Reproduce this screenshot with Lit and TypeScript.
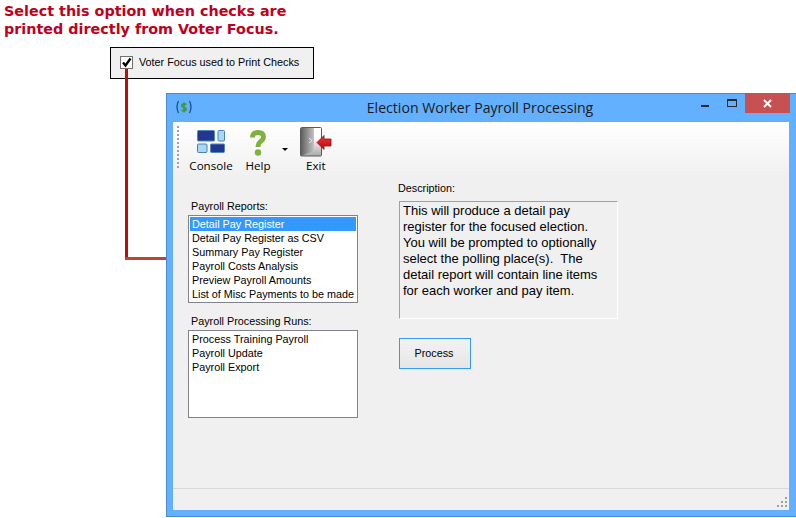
import { LitElement, html, css } from "lit";
import { customElement } from "lit/decorators.js";

const reports = ["Detail Pay Register","Detail Pay Register as CSV","Summary Pay Register","Payroll Costs Analysis","Preview Payroll Amounts","List of Misc Payments to be made"];
const runs = ["Process Training Payroll","Payroll Update","Payroll Export"];
const desc = ["This will produce a detail pay","register for the focused election.","You will be prompted to optionally","select the polling place(s).\u00a0 The","detail report will contain line items","for each worker and pay item."];

@customElement("app-root")
export class AppRoot extends LitElement {
  static styles = css`
    :host { display: block; position: relative; width: 796px; height: 518px; overflow: hidden; background: #fff; font-family: "Liberation Sans", Arial, sans-serif; font-size: 10.8px; color: #000; }
    .note { font: bold 14.35px/18px "DejaVu Sans", Verdana, sans-serif; color: #c00020; padding: 2px 0 0 4px; height: 47px; box-sizing: border-box; white-space: nowrap; }
    .callout { margin-left: 110px; width: 204px; height: 32px; box-sizing: border-box; border: 1px solid #000; background: #f0f0f0; display: flex; align-items: center; padding: 0 0 2px 9px; gap: 6px; }
    .check { width: 13px; height: 13px; box-sizing: border-box; border: 1px solid #707070; background: #fff; display: block; }
    .vline { position: absolute; left: 125px; top: 69px; width: 3px; height: 190px; background: #b80f0a; }
    .hline { position: absolute; left: 125px; top: 257px; width: 41px; height: 3px; background: #c0442c; }
    .window { position: absolute; left: 166px; top: 93px; width: 630px; height: 424px; box-sizing: border-box; background: #62b0ff; border: 1px solid #4a8ccc; border-right: 0; display: flex; flex-direction: column; padding: 0 7px 6px 6px; }
    .titlebar { height: 28px; flex: none; position: relative; display: flex; align-items: center; justify-content: center; }
    .title { font: 14.1px "Open Sans", sans-serif; color: #1a1a1a; position: relative; top: -1px; left: -1px; }
    .appicon { position: absolute; left: 2px; top: 6px; }
    .ctl { position: absolute; left: 528px; top: 5px; }
    .close { position: absolute; right: -1px; top: -1px; width: 45px; height: 20px; background: #c75050; display: flex; align-items: center; justify-content: center; }
    .client { flex: 1; background: #f0f0f0; display: flex; flex-direction: column; min-height: 0; }
    .toolbar { height: 54px; flex: none; background: linear-gradient(#ffffff, #f0f0f0); display: flex; font: 11.6px "Open Sans", sans-serif; color: #000; }
    .grip { width: 2px; height: 44px; margin: 4px 0 0 4px; background: repeating-linear-gradient(#a0a0a0 0 2px, transparent 2px 4px); }
    .tool { display: flex; flex-direction: column; align-items: center; position: relative; height: 54px; flex: none; box-sizing: border-box; }
    .tool svg { display: block; }
    .tool span { position: absolute; top: 36px; white-space: nowrap; line-height: 16px; }
    .console { width: 42px; margin-left: 11px; padding-top: 8px; }
    .help { width: 26px; margin-left: 13px; padding-top: 8px; }
    .arrow { flex: none; margin: 26px 0 0 11px; }
    .exit { width: 40px; margin-left: 7px; padding: 5px 0 0 2px; }
    .exit span { left: 11px; }
    .body { flex: 1; display: grid; grid-template-columns: 225px 1fr; min-height: 0; }
    .left { padding-top: 23px; padding-left: 15px; display: flex; flex-direction: column; }
    .lbl { height: 15px; line-height: 15px; padding-left: 3px; white-space: nowrap; }
    .list { width: 170px; height: 88px; box-sizing: border-box; border: 1px solid #82828c; background: #fff; padding: 1px; margin-top: 1px; }
    .gap { height: 11px; }
    .item { height: 14px; line-height: 14px; padding-left: 2px; white-space: nowrap; }
    .item.sel { background: #3399ff; color: #fff; }
    .right { padding-top: 5px; display: flex; flex-direction: column; align-items: flex-start; }
    .desc-l { height: 15px; line-height: 15px; }
    .desc { margin: 5px 0 0 1px; width: 219px; height: 118px; box-sizing: border-box; border: 1px solid; border-color: #a0a0a0 #fff #fff #a0a0a0; padding: 1px 0 0 3px; font-size: 13px; line-height: 16.1px; white-space: nowrap; }
    .btn { margin: 19px 0 0 1px; width: 72px; height: 31px; box-sizing: border-box; border: 1px solid #3399ff; background: linear-gradient(#f2f2f2, #e6e6e6); display: flex; align-items: center; justify-content: center; padding: 0 2px 2px 0; }
    .status { height: 21px; flex: none; border-top: 1px solid #d9d9d9; position: relative; }
    .sizer { position: absolute; right: 1px; bottom: 2px; }
  `;

  render() {
    return html`
      <div class="note">Select this option when checks are<br>printed directly from Voter Focus.</div>
      <div class="callout">
        <svg class="check" viewBox="0 0 11 11"><path d="M2 5.5 L4.5 8.5 L9.5 1.5" fill="none" stroke="#000" stroke-width="2.3"/></svg>
        <span>Voter Focus used to Print Checks</span>
      </div>
      <div class="vline"></div>
      <div class="hline"></div>
      <div class="window">
        <div class="titlebar">
          <svg class="appicon" width="18" height="16" viewBox="0 0 18 16">
            <path d="M3.5 1 Q0.5 7 3.5 13M14.5 1 Q17.5 7 14.5 13" fill="none" stroke="#1f4f90" stroke-width="1.3"/>
            <path d="M11.5 4.6 Q9 3.4 7.2 4.4 Q5.8 6 8 7 Q11.6 8 11 9.8 Q9.5 11.4 6.4 10.2M9 2.5v10" fill="none" stroke="#3d9a3d" stroke-width="1.7"/>
          </svg>
          <span class="title">Election Worker Payroll Processing</span>
          <svg class="ctl" width="37" height="9" viewBox="0 0 37 9">
            <rect x="0" y="6" width="8" height="2" fill="#2a2a2a"/>
            <rect x="26.5" y="0.5" width="9" height="7" fill="none" stroke="#2a2a2a"/>
            <rect x="26" y="0" width="10" height="2" fill="#2a2a2a"/>
          </svg>
          <div class="close"><svg width="9" height="9" viewBox="0 0 9 9"><path d="M1 1 L8 8M8 1 L1 8" stroke="#fff" stroke-width="2"/></svg></div>
        </div>
        <div class="client">
          <div class="toolbar">
            <div class="grip"></div>
            <div class="tool console">
              <svg width="28" height="23" viewBox="0 0 28 23">
                <rect x="0.5" y="0.5" width="17" height="10.5" rx="1" fill="#24378f" stroke="#4f86c0"/>
                <rect x="21" y="0.5" width="6.5" height="10.5" rx="1" fill="#a5d8f2" stroke="#4f7fb8"/>
                <rect x="0.5" y="14" width="9.5" height="8.5" rx="1" fill="#a5d8f2" stroke="#4f7fb8"/>
                <rect x="13.5" y="14" width="14" height="8.5" rx="1" fill="#24378f" stroke="#4f86c0"/>
              </svg>
              <span>Console</span>
            </div>
            <div class="tool help">
              <svg width="16" height="26" viewBox="0 0 16 26">
                <path d="M2.5 7.5 Q2.5 2.5 8 2.5 Q13.5 2.5 13.5 7 Q13.5 9.5 10.5 11.5 Q8 13.5 8 17" fill="none" stroke="#80b040" stroke-width="4.8"/>
                <circle cx="8" cy="22.5" r="3.2" fill="#80b040"/>
              </svg>
              <span>Help</span>
            </div>
            <svg class="arrow" width="6" height="3" viewBox="0 0 6 3"><path d="M0 0H6L3 3Z" fill="#000"/></svg>
            <div class="tool exit">
              <svg width="32" height="30" viewBox="0 0 32 30">
                <defs>
                  <linearGradient id="d" x1="0" x2="1" y1="0" y2="0"><stop offset="0" stop-color="#5f5f5f"/><stop offset="1" stop-color="#c4c4c4"/></linearGradient>
                  <linearGradient id="o" x1="0" x2="0" y1="1" y2="0"><stop offset="0" stop-color="#a8a8a8"/><stop offset=".6" stop-color="#fafafa"/><stop offset="1" stop-color="#fff"/></linearGradient>
                  <linearGradient id="r" x1="0" x2="0" y1="0" y2="1"><stop offset="0" stop-color="#f0343a"/><stop offset="1" stop-color="#b80a0f"/></linearGradient>
                </defs>
                <rect x="0.5" y="0.5" width="21" height="28.5" rx="1" fill="url(#o)" stroke="#5a5a5a"/>
                <path d="M1 1 H14 V24 L1 29Z" fill="url(#d)"/>
                <path d="M9 11 L12 13.5 L9 16" fill="none" stroke="#e6e6e6"/>
                <path d="M17 15.5 L24 8.5 V12 H31 V19 H24 V22.5Z" fill="url(#r)" stroke="#9a0a0a" stroke-width=".8"/>
              </svg>
              <span>Exit</span>
            </div>
          </div>
          <div class="body">
            <div class="left">
              <div class="lbl">Payroll Reports:</div>
              <div class="list">${reports.map((r,i)=>html`<div class="item ${i===0?"sel":""}">${r}</div>`)}</div>
              <div class="gap"></div>
              <div class="lbl">Payroll Processing Runs:</div>
              <div class="list">${runs.map(r=>html`<div class="item">${r}</div>`)}</div>
            </div>
            <div class="right">
              <div class="desc-l">Description:</div>
              <div class="desc">${desc.map(d=>html`<div>${d}</div>`)}</div>
              <div class="btn">Process</div>
            </div>
          </div>
          <div class="status">
            <svg class="sizer" width="11" height="11" viewBox="0 0 11 11" fill="#a0a0a0">
              <rect x="8" y="0" width="2" height="2"/><rect x="4" y="4" width="2" height="2"/><rect x="8" y="4" width="2" height="2"/><rect x="0" y="8" width="2" height="2"/><rect x="4" y="8" width="2" height="2"/><rect x="8" y="8" width="2" height="2"/>
            </svg>
          </div>
        </div>
      </div>
    `;
  }
}
